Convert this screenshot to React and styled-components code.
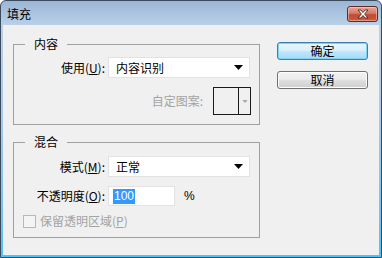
import React from "react";
import styled, { createGlobalStyle } from "styled-components";

const GlobalStyle = createGlobalStyle`
  html, body {
    margin: 0;
    padding: 0;
    background: #ffffff;
  }
  body {
    font-family: "Liberation Sans", "Noto Sans CJK SC", sans-serif;
    font-size: 12px;
  }
`;

const CloseIcon = () => (
  <svg width="14" height="10" viewBox="0 0 14 10">
    <path
      d="M2 1 L5 1 L7 3.5 L9 1 L12 1 L8.6 5 L12 9 L9 9 L7 6.5 L5 9 L2 9 L5.4 5 Z"
      fill="#ffffff"
      stroke="#5a1f16"
      strokeWidth="0.9"
      strokeLinejoin="round"
    />
  </svg>
);

const ArrowDown = ({ color = "#000" }) => (
  <svg width="9" height="5" viewBox="0 0 9 5">
    <path d="M0 0 L9 0 L4.5 5 Z" fill={color} />
  </svg>
);

const Dialog = () => {
  return (
    <Window>
      <TitleBar>
        <Title>填充</Title>
        <CloseButton>
          <CloseIcon />
        </CloseButton>
      </TitleBar>
      <Client>
        <LeftCol>
          <Group>
            <Legend>内容</Legend>
            <FormGrid>
              <FieldLabel>
                使用(<u>U</u>):
              </FieldLabel>
              <Select>
                <span>内容识别</span>
                <ArrowDown />
              </Select>
            </FormGrid>
            <PatternRow>
              <FieldLabel disabled>自定图案:</FieldLabel>
              <PatternBox>
                <PatternSwatch />
                <PatternArrow>
                  <ArrowDown color="#a8a8a8" />
                </PatternArrow>
              </PatternBox>
            </PatternRow>
          </Group>

          <Group second>
            <Legend>混合</Legend>
            <FormGrid>
              <FieldLabel>
                模式(<u>M</u>):
              </FieldLabel>
              <Select>
                <span>正常</span>
                <ArrowDown />
              </Select>
              <FieldLabel>
                不透明度(<u>O</u>):
              </FieldLabel>
              <InputRow>
                <TextInput>
                  <Selected>100</Selected>
                </TextInput>
                <Unit>%</Unit>
              </InputRow>
            </FormGrid>
            <CheckRow>
              <CheckBox />
              <CheckLabel>
                保留透明区域(<u>P</u>)
              </CheckLabel>
            </CheckRow>
          </Group>
        </LeftCol>

        <ButtonCol>
          <Button primary>确定</Button>
          <Button>取消</Button>
        </ButtonCol>
      </Client>
    </Window>
  );
};

const App = () => (
  <>
    <GlobalStyle />
    <Dialog />
  </>
);

const Window = styled.div`
  width: 382px;
  height: 258px;
  box-sizing: border-box;
  border: 1px solid #3d4b5e;
  border-radius: 6px 6px 0 0;
  background: linear-gradient(
    #9bb6d6 0px,
    #bad0e8 24px,
    #a9c9e8 45%,
    #72c2ec 85%,
    #4cc4f4 100%
  );
  display: flex;
  flex-direction: column;
  overflow: hidden;
`;

const TitleBar = styled.div`
  height: 24px;
  display: flex;
  align-items: center;
  justify-content: space-between;
  padding: 0 3px 0 6px;
`;

const Title = styled.div`
  font-family: "Noto Sans CJK SC", sans-serif;
  font-size: 12px;
  color: #000;
  line-height: 14px;
  margin-top: 1px;
`;

const CloseButton = styled.div`
  width: 31px;
  height: 16px;
  margin-top: 2px;
  box-sizing: border-box;
  border: 1px solid #5e2a22;
  border-radius: 3px;
  background: linear-gradient(#e8a595 0%, #d57a66 45%, #c24b33 55%, #c8593f 100%);
  box-shadow: inset 0 0 0 1px rgba(255, 220, 210, 0.5);
  display: flex;
  align-items: center;
  justify-content: center;
`;

const Client = styled.div`
  flex: 1;
  margin: 0 2px 2px;
  background: #f0f0f0;
  display: flex;
  padding: 12px 11px 0 10px;
  gap: 17px;
`;

const LeftCol = styled.div`
  width: 247px;
  display: flex;
  flex-direction: column;
`;

const Group = styled.fieldset`
  margin: ${(p) => (p.second ? "10px" : "0")} 0 0 0;
  padding: ${(p) => (p.second ? "7px" : "6px")} 8px 9px 0;
  border: 1px solid #a0a0a0;
  min-width: 0;
`;

const Legend = styled.legend`
  margin-left: 11px;
  padding: 0 9px;
  font-family: "Noto Sans CJK SC", sans-serif;
  font-size: 12px;
  line-height: 14px;
  color: #000;
`;

const FormGrid = styled.div`
  display: grid;
  grid-template-columns: 91px 142px;
  column-gap: 3px;
  row-gap: 9px;
  align-items: center;
`;

const FieldLabel = styled.label`
  text-align: right;
  font-family: "Noto Sans CJK SC", sans-serif;
  font-size: 12px;
  line-height: 14px;
  color: ${(p) => (p.disabled ? "#a3a3a3" : "#000")};
  white-space: nowrap;
  u {
    text-underline-offset: 1px;
  }
`;

const Select = styled.div`
  height: 21px;
  box-sizing: border-box;
  border: 1px solid #e2e2e2;
  background: #ffffff;
  display: flex;
  align-items: center;
  justify-content: space-between;
  padding: 0 6px 0 7px;
  font-family: "Noto Sans CJK SC", sans-serif;
  font-size: 12px;
  line-height: 14px;
  color: #000;
`;

const PatternRow = styled.div`
  display: flex;
  justify-content: flex-end;
  align-items: center;
  gap: 10px;
  margin-top: 9px;
`;

const PatternBox = styled.div`
  width: 38px;
  height: 28px;
  box-sizing: border-box;
  border: 1px solid #1a1a1a;
  display: flex;
  background: #f0f0f0;
`;

const PatternSwatch = styled.div`
  flex: 1;
  border-right: 1px solid #1a1a1a;
`;

const PatternArrow = styled.div`
  width: 11px;
  display: flex;
  align-items: center;
  justify-content: center;
  svg {
    width: 6px;
    height: 3px;
  }
`;

const InputRow = styled.div`
  display: flex;
  align-items: center;
  gap: 9px;
`;

const TextInput = styled.div`
  width: 67px;
  height: 20px;
  box-sizing: border-box;
  border: 1px solid #e2e2e2;
  background: #ffffff;
  display: flex;
  align-items: center;
  padding-left: 4px;
`;

const Selected = styled.span`
  background: #3399ff;
  color: #ffffff;
  font-family: "Liberation Sans", sans-serif;
  font-size: 12px;
  line-height: 15px;
  padding: 0 1px;
`;

const Unit = styled.span`
  font-family: "Liberation Sans", sans-serif;
  font-size: 12px;
  color: #000;
`;

const CheckRow = styled.div`
  display: flex;
  align-items: center;
  gap: 4px;
  margin-top: 8px;
  padding-left: 9px;
`;

const CheckBox = styled.div`
  width: 13px;
  height: 13px;
  box-sizing: border-box;
  border: 1px solid #b8b8b8;
  background: #f4f4f4;
`;

const CheckLabel = styled.span`
  font-family: "Noto Sans CJK SC", sans-serif;
  font-size: 12px;
  line-height: 14px;
  color: #a3a3a3;
`;

const ButtonCol = styled.div`
  display: flex;
  flex-direction: column;
  gap: 11px;
  margin-top: 5px;
`;

const Button = styled.div`
  width: 91px;
  height: 18px;
  box-sizing: border-box;
  border: 1px solid ${(p) => (p.primary ? "#3c7fb1" : "#707070")};
  border-radius: 3px;
  background: ${(p) =>
    p.primary
      ? "linear-gradient(#eaf6fd 0%, #d9f0fc 45%, #bee6fd 55%, #a7d9f5 100%)"
      : "linear-gradient(#f2f2f2 0%, #ebebeb 45%, #dddddd 55%, #cfcfcf 100%)"};
  box-shadow: ${(p) =>
    p.primary ? "inset 0 0 0 1px #7fd2f6" : "inset 0 0 0 1px #fcfcfc"};
  display: flex;
  align-items: center;
  justify-content: center;
  font-family: "Noto Sans CJK SC", sans-serif;
  font-size: 12px;
  line-height: 14px;
  color: #000;
`;

export default App;
